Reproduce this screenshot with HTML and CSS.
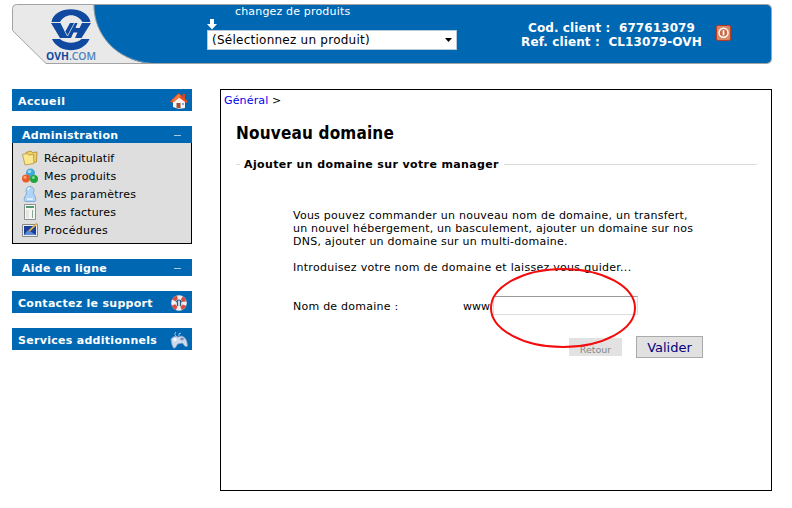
FILE: index.html
```html
<!DOCTYPE html>
<html lang="fr">
<head>
<meta charset="utf-8">
<title>OVH Manager</title>
<link rel="stylesheet" href="styles.css">
</head>
<body>
<header class="top">
  <svg class="logo" width="150" height="60" viewBox="12 4 150 60">
    <path d="M12.500 8.500 Q12.500 4.500 16.500 4.500 H94 C94 35 116 60 151 63.500 H46 L12.500 30.500 Z" fill="#e9e9e9" stroke="#a3a3a3"/>
    <path d="M94 4 C94 35 116 60 151 64 H162 V4 Z" fill="#0068b3"/>
    <path d="M94 5 C94 35 116 60 151 63.300" fill="none" stroke="#8f9fa9" stroke-width=".8"/>
    <path d="M94 4.500H162M46 63.500H162" fill="none" stroke="#a3a3a3"/>
    <g fill="#1049a0">
      <path d="M51.500 22 C54 5 87.500 5 90.500 22 H82.500 C77 13 65 13 60 22 Z"/>
      <path d="M52 39 H60 C66 44 76 44 81.500 39 H89.500 C83 54 59 54 52 39 Z"/>
      <path d="M51 23 H60.500 L65 32 L70 23 H77.500 L75.500 28 H79.500 L82 23 H91 L81.500 38 H75 L77.500 32.500 H73.500 L71 38 H60 Z"/>
    </g>
    <path d="M65 31.500 L67.500 36 L74.500 23" fill="none" stroke="#e9e9e9" stroke-width=".8"/>
    <text x="46" y="59.500" class="brand" textLength="50" lengthAdjust="spacingAndGlyphs"><tspan fill="#1049a0">OVH</tspan><tspan fill="#4b82bf" class="com">.COM</tspan></text>
  </svg>
  <div class="switcher">
    <p class="hint">changez de produits</p>
    <svg class="arrow" width="10" height="11" viewBox="0 0 10 11"><path d="M3 0h4v5h3L5 10.500 0 5h3z" fill="#fff"/></svg>
    <div class="select"><span>(Sélectionnez un produit)</span><svg width="7" height="4" viewBox="0 0 7 4"><path d="M0 0h7L3.500 4z" fill="#000"/></svg></div>
  </div>
  <p class="client"><span>Cod. client :&nbsp; 677613079</span><br><span>Ref. client :&nbsp; CL13079-OVH</span></p>
  <svg class="power" width="15" height="16" viewBox="0 0 15 16"><rect x=".5" y=".5" width="14" height="15" rx="1.500" fill="#d88a66" stroke="#b93a22"/><circle cx="7.500" cy="7.800" r="4.500" fill="#c96a48" stroke="#fff" stroke-width="1.500"/><path d="M7.500 5.200v5.200" stroke="#fff" stroke-width="1.700"/></svg>
</header>
<div class="columns">
  <nav class="side">
    <a class="bar"><span class="t-accueil">Accueil</span>
      <svg width="18" height="18" viewBox="0 0 18 18"><path d="M3 8.500 9 3.500l6 5V16l-6 1-6-2z" fill="#f5f2ef"/><path d="M12.500 2h2.500v5l-2.500-2z" fill="#d9471e"/><path d="M0 9.500 8.500 1 18 9.500l-1.500 1.500L9 5.500 2 11z" fill="#e94c1b"/><path d="M2 8.500 8.500 2 11 4 4 10z" fill="#f77a3c"/><path d="M6.500 11h4v5.500l-4-.800z" fill="#9b5334"/><path d="M12 11h2v2h-2z" fill="#8ba7cf"/></svg>
    </a>
    <section class="group">
      <h2 class="head"><span>Administration</span><i class="minus"></i></h2>
      <ul class="items">
        <li><svg width="16" height="16" viewBox="0 0 16 16"><path d="M4 2.500 9 1l1.500 1.500L15 2l-.500 10-8 1z" fill="#ecd066" stroke="#ad8930" stroke-width=".8"/><path d="M.500 4.500 5 3.500 6.500 5l5-.500.500 9-9 1.500z" fill="#f9e890" stroke="#b3943f" stroke-width=".8"/></svg><span class="w-recap">Récapitulatif</span></li>
        <li><svg width="16" height="16" viewBox="0 0 16 16"><circle cx="8.500" cy="5" r="4.500" fill="#41a8d8"/><circle cx="7.500" cy="3.500" r="1.800" fill="#9bdcf2"/><circle cx="4" cy="10.500" r="4" fill="#ed5b28"/><circle cx="3" cy="9.300" r="1.500" fill="#ffa27a"/><circle cx="12" cy="11" r="4" fill="#20a542"/><circle cx="11.300" cy="9.500" r="1.500" fill="#7bd989"/></svg><span>Mes produits</span></li>
        <li><svg width="16" height="16" viewBox="0 0 16 16"><path d="M4 4.500C4-.8 12-.8 12 4.500c0 2-1 2.500-.500 3.500 2 2 3.500 7.500 1 7.500h-9c-2.500 0-1-5.500 1-7.500.500-1-.500-1.500-.500-3.500z" fill="#b0d3f6" stroke="#6a9ed2" stroke-width=".8"/><path d="M6 4q0-2 2-2" fill="none" stroke="#e9f5ff" stroke-width="1.500"/><path d="M5 12.500q3 1.500 6 0" fill="none" stroke="#e4f3ff" stroke-width="1.500"/></svg><span class="w-param">Mes paramètres</span></li>
        <li><svg width="16" height="16" viewBox="0 0 16 16"><path d="M2.500.5h11v15h-11z" fill="#f5f5f2" stroke="#909090"/><path d="M4 2h8v2H4z" fill="#4f9b72"/><path d="M4 7h3M4 9h3M4 11h3M4 13h3" stroke="#d3d3d3"/><path d="M10.500 6v8" stroke="#8ba899"/></svg><span>Mes factures</span></li>
        <li><svg width="16" height="16" viewBox="0 0 16 16"><path d="M.500 2.500h15v12H.5z" fill="#edf0f2" stroke="#888"/><path d="M2 4h12v9H2z" fill="#173f9b"/><path d="M2 13 6 8l8 5z" fill="#5c8dd8"/><path d="m6.500 10 1-2.500 7-6.500 1 1-6.500 6.500z" fill="#efc251" stroke="#a47e30" stroke-width=".4"/></svg><span class="w-proc">Procédures</span></li>
      </ul>
    </section>
    <h2 class="head"><span>Aide en ligne</span><i class="minus"></i></h2>
    <a class="bar"><span>Contactez le support</span>
      <svg width="18" height="18" viewBox="0 0 18 18"><circle cx="9" cy="9" r="5.800" fill="#d9e5ef" stroke="#f4eeee" stroke-width="4"/><circle cx="9" cy="9" r="5.800" fill="none" stroke="#d84e45" stroke-width="4" stroke-dasharray="4.550 4.560" stroke-dashoffset="-2.200"/><path d="M6 8q3-4 6 0M7.500 7v5M10.500 7v5" fill="none" stroke="#315b80" stroke-width="1.200"/></svg>
    </a>
    <a class="bar"><span>Services additionnels</span>
      <svg width="18" height="18" viewBox="0 0 18 18"><path d="M8 7Q3 3 6 1M9 5q-1-3 2-3" fill="none" stroke="#a9c4df"/><path d="M1 8q3-4 7-2l4-1q5 2 5.500 10-2 2-5-3l-5 1q-2 5-4 4-2-3-2.500-9z" fill="#cddaeb" stroke="#8da3c6" stroke-width=".7"/><circle cx="5" cy="8.500" r="1.700" fill="#f5f9ff"/><path d="M10 8h4M12 6.500v3" stroke="#6477a8"/></svg>
    </a>
  </nav>
  <main class="panel">
    <p class="crumb"><a>Général</a> &gt;</p>
    <h1><span>Nouveau domaine</span></h1>
    <div class="legend"><i class="rule-start"></i><span>Ajouter un domaine sur votre manager</span><i class="rule"></i></div>
    <div class="form">
      <p><span>Vous pouvez commander un nouveau nom de domaine, un transfert,</span><br><span class="l2">un nouvel hébergement, un basculement, ajouter un domaine sur nos</span><br><span>DNS, ajouter un domaine sur un multi-domaine.</span></p>
      <p><span class="l4">Introduisez votre nom de domaine et laissez vous guider...</span></p>
      <div class="field"><label for="domain">Nom de domaine :</label><span class="www">www.</span><input id="domain" type="text"></div>
      <div class="actions"><button class="back">Retour</button><button class="ok">Valider</button></div>
      <svg class="mark" width="148" height="82" viewBox="0 0 148 82"><ellipse cx="74" cy="41" rx="72" ry="39" fill="none" stroke="#f40b0b" stroke-width="2"/></svg>
    </div>
  </main>
</div>
</body>
</html>
```

FILE: styles.css
```css
* { box-sizing: border-box; }
body { margin: 0; padding: 4px 20px 0 12px; background: #fff; color: #000; font: 11px/13px "DejaVu Sans", sans-serif; }
p, h1, h2, ul { margin: 0; padding: 0; }
svg { display: block; flex: none; }
span { white-space: nowrap; }

.top { display: flex; height: 60px; background: #0068b3; border: 1px solid #a3a3a3; border-left: 0; border-radius: 4px 5px 5px 0; color: #fff; background-clip: padding-box; }
.logo { margin-top: -1px; background: #fff; }
.brand { font: bold 11px "Open Sans", sans-serif; }
.com { font-weight: 600; }
.switcher { width: 250px; margin-left: 45px; }
.hint { height: 14px; padding-left: 28px; letter-spacing: .17px; }
.select { display: flex; align-items: center; justify-content: space-between; height: 20px; padding: 0 4px; background: #fff; border: 1px solid #b7c9d8; color: #000; font-size: 12px; letter-spacing: .25px; }
.client { width: 181px; margin: 16px 0 0 64px; text-align: center; font-weight: bold; font-size: 12px; line-height: 14px; letter-spacing: .1px; }
.power { margin: 20px 0 0 14px; }

.columns { display: flex; align-items: flex-start; gap: 28px; margin-top: 25px; }
.side { display: flex; flex-direction: column; gap: 15px; width: 180px; }
.bar, .head { display: flex; justify-content: space-between; align-items: center; background: #0068b3; color: #fff; font-size: 11px; font-weight: bold; letter-spacing: .29px; }
.bar { height: 22px; padding: 2px 4px 0 6px; }
.head { height: 17px; padding: 1px 11px 0 10px; }
.t-accueil { letter-spacing: .42px; }
.minus { width: 7px; height: 1px; background: #a6cae6; }
.group { height: 118px; }
.items { height: 101px; padding: 6px 9px 0; list-style: none; background: #dedede; border: 1px solid #000; border-top: 0; letter-spacing: .16px; }
.items li { display: flex; align-items: center; gap: 6px; height: 18px; }
.w-recap { letter-spacing: .09px; }
.w-param { letter-spacing: .22px; }
.w-proc { letter-spacing: .3px; }

.panel { width: 552px; height: 402px; border: 1px solid #000; }
.crumb { padding: 4px 0 0 3px; letter-spacing: .15px; }
.crumb a { color: #0000f0; }
h1 { padding: 16px 0 0 15px; font: bold 17px/20px "DejaVu Sans Condensed", "DejaVu Sans", sans-serif; font-stretch: condensed; letter-spacing: .18px; }
.legend { display: flex; align-items: center; height: 13px; margin: 15px 14px 0 15px; font-weight: bold; letter-spacing: .37px; }
.legend i { height: 1px; background: #dcdcdc; }
.rule-start { width: 4px; margin-right: 4px; }
.rule { flex: 1; margin-left: 5px; }
.form { position: relative; padding: 38px 0 0 72px; letter-spacing: .24px; }
.form p { margin-bottom: 13px; }
.l2 { letter-spacing: .21px; }
.l4 { letter-spacing: .28px; }
.field { display: flex; align-items: center; height: 20px; margin-top: 21px; }
.field label { width: 170px; padding-top: 2px; }
.www { width: 30px; padding-top: 2px; letter-spacing: 0; }
.field input { width: 145px; height: 19px; padding: 1px; border: 1px solid #ddd; border-top-color: #999; background: transparent; }
.actions { display: flex; align-items: flex-end; gap: 14px; margin: 21px 0 0 276px; }
.actions button { font-family: "DejaVu Sans", sans-serif; }
.back { width: 53px; height: 18px; margin-bottom: 2px; padding: 5px 0 0; border: 0; background: #e2e2e2; color: #888; font-size: 9.500px; line-height: 13px; }
.ok { width: 67px; height: 22px; padding: 2px 0 0; border: 1px solid #aaa; background: #e1e1e1; color: #00007d; font-size: 13px; line-height: 18px; }
.mark { position: absolute; left: 268px; top: 96px; }
```
